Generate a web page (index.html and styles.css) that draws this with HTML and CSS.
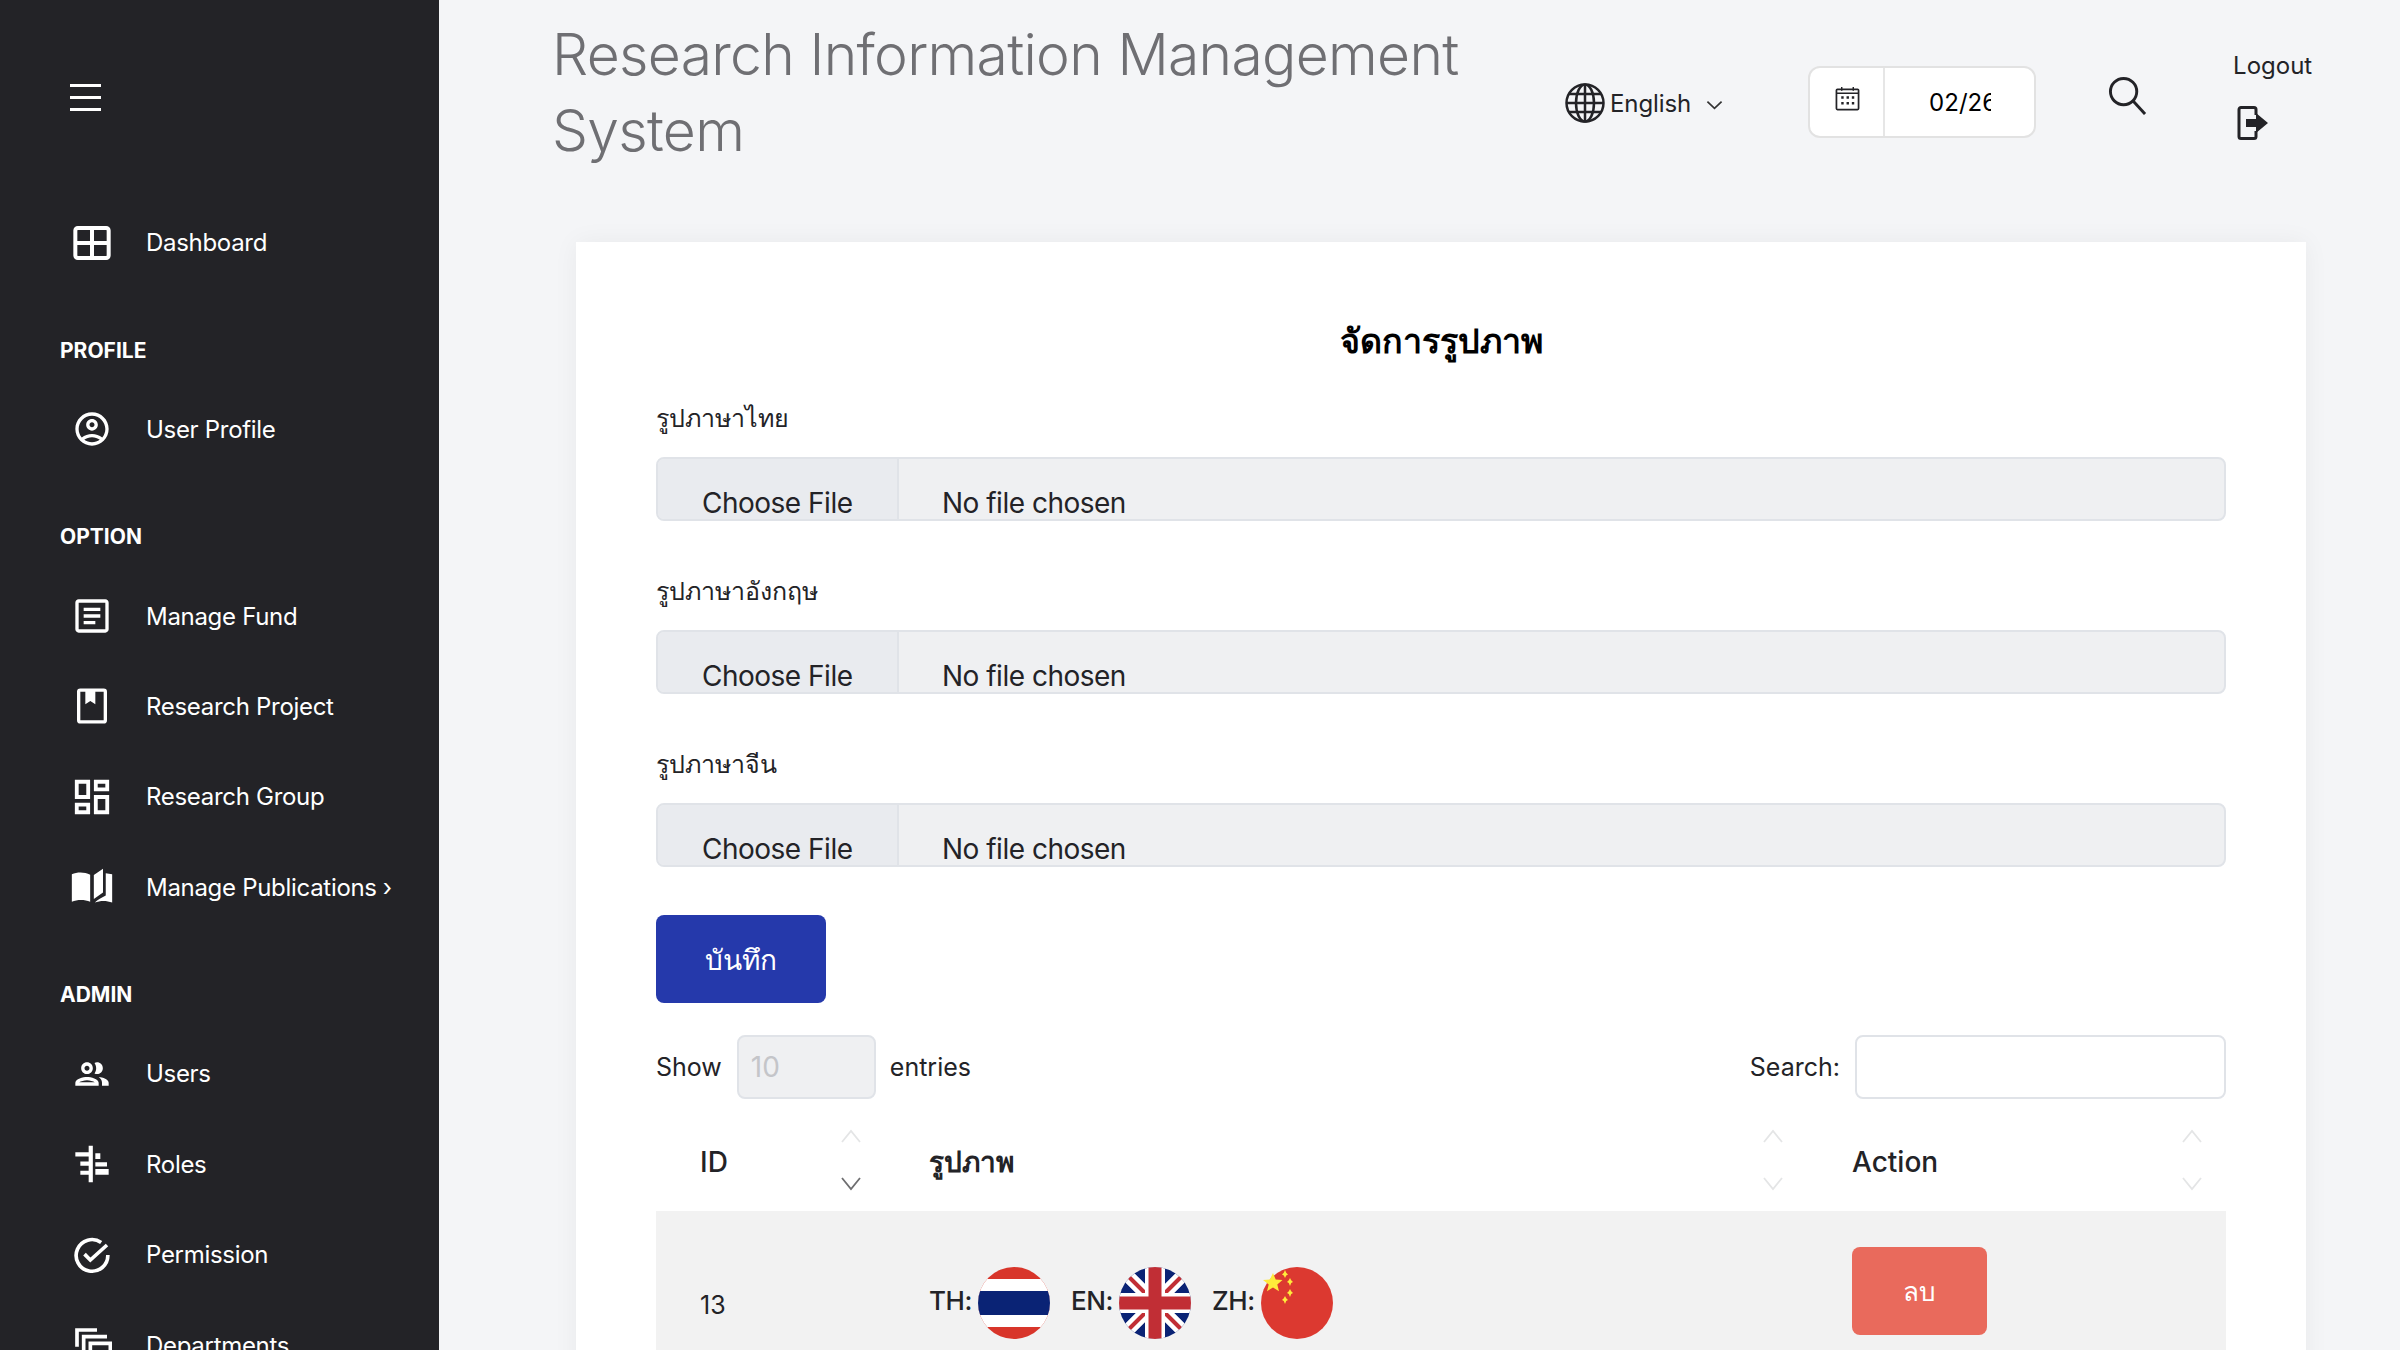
FILE: index.html
```html
<!DOCTYPE html>
<html>
	<head>
		<meta charset="utf-8">
		<title>Research Information Management System</title>
		<link rel="stylesheet" href="styles.css">
	</head>
	<body>
		<div class="sidebar">
			<div class="burger"><span></span><span></span><span></span></div>
			<ul class="menu first">
				<li>
					<svg class="ico" viewBox="0 0 24 24"><rect x="2" y="3" width="20" height="18" rx="1.500" fill="none" stroke="#fff" stroke-width="2.400"/><path d="M12 3v18M2 12h20" stroke="#fff" stroke-width="2.400"/></svg>
					Dashboard
				</li>
			</ul>
			<div class="sect">PROFILE</div>
			<ul class="menu">
				<li>
					<svg class="ico" viewBox="0 0 24 24"><path fill="#fff" d="M12 2C6.480 2 2 6.480 2 12s4.480 10 10 10 10-4.480 10-10S17.520 2 12 2zM7.350 18.500C8.660 17.560 10.260 17 12 17s3.340.56 4.650 1.500C15.340 19.440 13.740 20 12 20s-3.340-.56-4.650-1.500zm10.790-1.380C16.450 15.800 14.320 15 12 15s-4.450.8-6.140 2.120C4.700 15.730 4 13.950 4 12c0-4.420 3.580-8 8-8s8 3.580 8 8c0 1.950-.7 3.730-1.860 5.120zM12 6c-1.930 0-3.500 1.570-3.500 3.500S10.070 13 12 13s3.500-1.570 3.500-3.500S13.930 6 12 6zm0 5c-.83 0-1.500-.67-1.500-1.500S11.170 8 12 8s1.500.67 1.500 1.500S12.830 11 12 11z"/></svg>
					User Profile
				</li>
			</ul>
			<div class="sect">OPTION</div>
			<ul class="menu">
				<li>
					<svg class="ico" viewBox="0 0 24 24"><path fill="#fff" d="M20 4v16H4V4h16m0-2H4c-1.100 0-2 .9-2 2v16c0 1.100.9 2 2 2h16c1.100 0 2-.9 2-2V4c0-1.100-.9-2-2-2zM14 17H7v-2h7v2zm3-4H7v-2h10v2zm0-4H7V7h10v2z"/></svg>
					Manage Fund
				</li>
				<li>
					<svg class="ico" viewBox="0 0 24 24"><rect x="4" y="2.500" width="16" height="19" rx="1" fill="none" stroke="#fff" stroke-width="2"/><path fill="#fff" d="M8 3h6v8l-3-2-3 2z"/></svg>
					Research Project
				</li>
				<li>
					<svg class="ico" viewBox="1.500 1.500 21 21"><path fill="#fff" d="M19 5v2h-4V5h4M9 5v6H5V5h4m10 8v6h-4v-6h4M9 17v2H5v-2h4M21 3h-8v6h8V3zM11 3H3v10h8V3zm10 8h-8v10h8V11zm-10 4H3v6h8v-6z"/></svg>
					Research Group
				</li>
				<li>
					<svg class="ico wide" viewBox="0 0 24 24"><path fill="#fff" d="M1 5c3-1.200 7-1.200 10 .3V20c-3-1.200-7-1.200-10 0zM13 5.500 18 2v13l-5 3.500z"/><path fill="#fff" d="M19.500 4.500 23 5v15.500c-3-1.200-6.500-1.200-9.500 0 2-1.800 4-2.800 6-3.800z"/></svg>
					Manage Publications <i class="more">›</i>
				</li>
			</ul>
			<div class="sect">ADMIN</div>
			<ul class="menu">
				<li>
					<svg class="ico" viewBox="0 0 24 24"><path fill="#fff" d="M9 13.750c-2.340 0-7 1.170-7 3.500V19h14v-1.750c0-2.330-4.660-3.500-7-3.500zM4.340 17c.84-.58 2.870-1.250 4.660-1.250s3.820.67 4.660 1.250H4.340zM9 12c1.930 0 3.500-1.570 3.500-3.500S10.930 5 9 5 5.500 6.570 5.500 8.500 7.070 12 9 12zm0-5c.83 0 1.500.67 1.500 1.500S9.830 10 9 10s-1.500-.67-1.500-1.500S8.170 7 9 7zm7.040 6.810c1.160.84 1.960 1.960 1.960 3.440V19h4v-1.750c0-2.020-3.500-3.170-5.960-3.440zM15 12c1.930 0 3.500-1.570 3.500-3.500S16.930 5 15 5c-.54 0-1.040.13-1.500.35.630.89 1 1.980 1 3.150s-.37 2.260-1 3.150c.46.22.96.35 1.500.35z"/></svg>
					Users
				</li>
				<li>
					<svg class="ico" viewBox="0 0 24 24"><path fill="#fff" d="M10 1h2.500v22H10zM2 5h8v2.500H2zM5 10.500h5V13H5zM5 16h5v2.500H5zM14 5.500h3V9h-3zM14 11h7v2.500h-7zM14 15h8v3.500h-8z"/></svg>
					Roles
				</li>
				<li>
					<svg class="ico" viewBox="0 0 24 24"><path fill="none" stroke="#fff" stroke-width="2.200" d="M17.500 4.500A9.500 9.500 0 1 0 21.500 12"/><path fill="none" stroke="#fff" stroke-width="2.200" d="M7.500 11.500l3.500 3.500 10-9"/></svg>
					Permission
				</li>
				<li>
					<svg class="ico" viewBox="0 0 24 24"><path fill="none" stroke="#fff" stroke-width="2.200" d="M3 13V3h12M7 17V7h14M11 21V11h12v10z"/></svg>
					Departments
				</li>
			</ul>
		</div>

		<div class="main">
			<div class="topbar">
				<div class="apptitle">Research Information Management System</div>
				<div class="lang">
					<svg class="globe" viewBox="0 0 40 40"><g fill="none" stroke="#232327" stroke-width="2.500"><circle cx="20" cy="20" r="18.500"/><ellipse cx="20" cy="20" rx="9" ry="18.500"/><path d="M20 1.500v37M1.500 20h37M4 11h32M4 29h32"/></g></svg>
					<span>English</span>
					<svg class="caret" viewBox="0 0 18 10"><path d="M1.500 1.500 9 8.500l7.500-7" fill="none" stroke="#333" stroke-width="1.800"/></svg>
				</div>
				<div class="datebox">
					<div class="datecal">
						<svg viewBox="0 0 26 26"><rect x="1.500" y="3.500" width="23" height="21" rx="1" fill="none" stroke="#232327" stroke-width="1.800"/><path d="M1.500 7.500h23M7 1v4M19 1v4" stroke="#232327" stroke-width="1.500"/><path d="M6.500 12h2.500M12 12h2.500M17.500 12h2.500M6.500 18h2.500M12 18h2.500M17.500 18h2.500" stroke="#232327" stroke-width="2.600"/></svg>
					</div>
					<div class="dateval"><span>02/26/2024</span></div>
				</div>
				<svg class="bigsearch" viewBox="0 0 40 40"><circle cx="16" cy="16" r="13.500" fill="none" stroke="#232327" stroke-width="3"/><path d="M26 26l12 13" stroke="#232327" stroke-width="3"/></svg>
				<div class="logout">
					<div>Logout</div>
					<svg viewBox="0 0 32 34"><path d="M19 9V3.500a2 2 0 0 0-2-2H4a2 2 0 0 0-2 2v27a2 2 0 0 0 2 2h13a2 2 0 0 0 2-2V25" fill="none" stroke="#232327" stroke-width="3"/><path fill="#232327" d="M9 13h10V7l12 10-12 10v-6H9z"/></svg>
				</div>
			</div>

			<div class="card">
				<h2>จัดการรูปภาพ</h2>
				<div class="field">
					<div class="lbl">รูปภาษาไทย</div>
					<div class="filebox"><span class="filebtn">Choose File</span><span class="filename">No file chosen</span></div>
				</div>
				<div class="field">
					<div class="lbl">รูปภาษาอังกฤษ</div>
					<div class="filebox"><span class="filebtn">Choose File</span><span class="filename">No file chosen</span></div>
				</div>
				<div class="field">
					<div class="lbl">รูปภาษาจีน</div>
					<div class="filebox"><span class="filebtn">Choose File</span><span class="filename">No file chosen</span></div>
				</div>
				<button class="savebtn">บันทึก</button>

				<div class="tools">
					<div class="show">Show <span class="sel">10</span> entries</div>
					<div class="find">Search: <span class="findbox"></span></div>
				</div>

				<table class="tbl">
					<colgroup><col class="c1"><col class="c2"><col class="c3"></colgroup>
					<thead>
						<tr>
							<th><div class="thin">ID
								<span class="sort"><svg viewBox="0 0 20 14"><path d="M1 13 10 2l9 11" class="off"/></svg><svg viewBox="0 0 20 14"><path d="M1 1l9 11 9-11" class="on"/></svg></span>
							</div></th>
							<th><div class="thin thai">รูปภาพ
								<span class="sort"><svg viewBox="0 0 20 14"><path d="M1 13 10 2l9 11" class="off"/></svg><svg viewBox="0 0 20 14"><path d="M1 1l9 11 9-11" class="off"/></svg></span>
							</div></th>
							<th><div class="thin">Action
								<span class="sort"><svg viewBox="0 0 20 14"><path d="M1 13 10 2l9 11" class="off"/></svg><svg viewBox="0 0 20 14"><path d="M1 1l9 11 9-11" class="off"/></svg></span>
							</div></th>
						</tr>
					</thead>
					<tbody>
						<tr>
							<td class="idcell">13</td>
							<td>
								<div class="flags">
									<b>TH:</b>
									<svg class="flag" viewBox="0 0 72 72"><defs><clipPath id="rnd"><circle cx="36" cy="36" r="36"/></clipPath></defs><g clip-path="url(#rnd)"><rect width="72" height="72" fill="#d8352a"/><rect y="12" width="72" height="48" fill="#fff"/><rect y="24" width="72" height="24" fill="#0a2375"/></g></svg>
									<b>EN:</b>
									<svg class="flag" viewBox="0 0 72 72"><g clip-path="url(#rnd)"><rect width="72" height="72" fill="#0a2375"/><path d="M0 0l72 72M72 0 0 72" stroke="#fff" stroke-width="13"/><path d="M6 6l24 24M66 66 42 42M66 6 42 30M6 66l24-24" stroke="#c12e35" stroke-width="4"/><path d="M36 0v72M0 36h72" stroke="#fff" stroke-width="20"/><path d="M36 0v72M0 36h72" stroke="#c12e35" stroke-width="13"/></g></svg>
									<b>ZH:</b>
									<svg class="flag" viewBox="0 0 72 72"><circle cx="36" cy="36" r="36" fill="#dc3930"/><path fill="#ffeb3b" d="M12 6l2.700 6.500 6.800.4-5.200 4.500 1.700 6.800-6-3.700-6 3.700 1.700-6.800L2 12.900l6.800-.4z"/><path fill="#ffeb3b" d="M24 3l1.200 2.700L27 7.500l-1.800 1L24 11l-1.200-2.500-1.800-1 1.800-1.800zM29 11l1.200 2.200L32 15l-1.800 1L29 19l-1.200-3-1.800-1 1.800-1.800zM29 22l1.200 2.200L32 26l-1.800 1L29 30l-1.200-3-1.800-1 1.800-1.800zM24 29l1.200 2.200L27 33l-1.800 1L24 37l-1.200-3-1.800-1 1.800-1.800z"/></svg>
								</div>
							</td>
							<td class="actcell"><button class="delbtn">ลบ</button></td>
						</tr>
					</tbody>
				</table>
			</div>
		</div>
	</body>
</html>
```

FILE: styles.css
```css
*{
	margin: 0;
	padding: 0;
	box-sizing: border-box;
}
html, body{
	height: 100%;
	overflow: hidden;
}
body{
	display: flex;
	background: #f4f5f7;
	font-family: Inter, "Noto Sans", "Liberation Sans", sans-serif;
	color: #232327;
}

/* sidebar */
.sidebar{
	width: 439px;
	height: 1350px;
	flex: none;
	overflow: hidden;
	background: #232327;
	color: #fff;
	padding: 84px 0 0 60px;
}
.burger{
	width: 31px;
	margin-left: 10px;
	display: flex;
	flex-direction: column;
	gap: 9.500px;
}
.burger span{
	height: 2.500px;
	background: #fff;
}
.menu{
	list-style: none;
}
.menu.first{
	margin-top: 87px;
}
.menu li{
	height: 90.400px;
	display: flex;
	align-items: center;
	padding-left: 12px;
	font-size: 24px;
	letter-spacing: -0.300px;
	white-space: nowrap;
}
.ico{
	width: 40px;
	height: 40px;
	flex: none;
	margin-right: 34px;
}
.ico.wide{
	width: 44px;
	height: 44px;
	margin: 0 32px 0 -2px;
}
.more{
	font-style: normal;
	margin-left: 6px;
}
.sect{
	font-size: 21px;
	font-weight: 700;
	height: 30px;
	line-height: 30px;
	margin: 47.700px 0 18.600px;
}

/* top bar */
.main{
	flex: 1;
	min-width: 0;
	padding-left: 113px;
}
.topbar{
	height: 242px;
	display: flex;
	align-items: flex-start;
}
.apptitle{
	width: 990px;
	margin-top: 17px;
	font-size: 57px;
	font-weight: 300;
	letter-spacing: -0.700px;
	line-height: 76px;
	color: #6f6f73;
	flex: none;
}
.lang{
	display: flex;
	align-items: center;
	margin: 83px 0 0 23px;
	font-size: 24px;
	letter-spacing: -0.100px;
	flex: none;
}
.globe{
	width: 40px;
	height: 40px;
	margin-right: 5px;
}
.caret{
	width: 17px;
	height: 10px;
	margin: 4px 0 0 15px;
}
.datebox{
	width: 228px;
	height: 72px;
	margin: 66px 0 0 85px;
	display: flex;
	flex: none;
	background: #fff;
	border: 2px solid #e2e2e2;
	border-radius: 12px;
}
.datecal{
	width: 75px;
	padding: 18px 0 0 25px;
	border-right: 2px solid #e6e6e6;
}
.datecal svg{
	width: 25px;
	height: 25px;
	display: block;
}
.dateval{
	width: 62px;
	margin: 0 0 0 44px;
	overflow: hidden;
	white-space: nowrap;
	font-size: 24px;
	line-height: 70px;
	color: #000;
}
.bigsearch{
	width: 39px;
	height: 39px;
	margin: 76px 0 0 72px;
	flex: none;
}
.logout{
	margin: 51px 0 0 86px;
	font-size: 24px;
	line-height: 30px;
	flex: none;
}
.logout svg{
	display: block;
	width: 32px;
	height: 34px;
	margin: 25px 0 0 4px;
}

/* card */
.card{
	width: 1730px;
	height: 1300px;
	margin-left: 24px;
	padding: 0 80px;
	background: #fff;
	box-shadow: 0 0 24px rgba(0,0,0,0.05);
}
.card h2{
	text-align: center;
	font-size: 34px;
	font-weight: 700;
	line-height: 50px;
	padding-top: 74px;
	height: 124px;
	color: #000;
}
.field{
	height: 173px;
}
.lbl{
	font-size: 25px;
	line-height: 40px;
	padding-top: 32px;
	height: 91px;
}
.filebox{
	height: 64px;
	display: flex;
	overflow: hidden;
	background: #eff0f2;
	border: 2px solid #e0e3e8;
	border-radius: 8px;
	font-size: 28px;
	letter-spacing: -0.500px;
	line-height: 40px;
}
.filebtn{
	width: 241px;
	padding: 24px 0 0 44px;
	background: #e9ebef;
	border-right: 2px solid #e0e3e8;
}
.filename{
	padding: 24px 0 0 43px;
}
.savebtn{
	display: block;
	width: 170px;
	height: 88px;
	margin-top: 30px;
	padding-top: 2px;
	border: 0;
	border-radius: 8px;
	background: #2539ab;
	color: #fff;
	font: inherit;
	font-size: 28px;
}
.tools{
	display: flex;
	justify-content: space-between;
	margin-top: 32px;
	font-size: 25px;
	line-height: 30px;
}
.show, .find{
	display: flex;
	align-items: center;
	white-space: nowrap;
}
.sel{
	width: 139px;
	height: 64px;
	margin: 0 14px 0 15px;
	padding-left: 12px;
	line-height: 60px;
	font-size: 28px;
	color: #c4c5c9;
	background: #eff0f2;
	border: 2px solid #e0e3e8;
	border-radius: 8px;
}
.findbox{
	width: 371px;
	height: 64px;
	margin-left: 15px;
	background: #fff;
	border: 2px solid #e0e3e8;
	border-radius: 8px;
}

/* table */
.tbl{
	width: 100%;
	margin-top: 12px;
	border-collapse: collapse;
	table-layout: fixed;
}
.c1{ width: 229px; }
.c2{ width: 923px; }
.tbl th{
	height: 100px;
	text-align: left;
	font-size: 28px;
	font-weight: 500;
}
.thin{
	display: flex;
	justify-content: space-between;
	align-items: center;
	padding: 2px 24px 0 44px;
}
.thin.thai{
	font-weight: 700;
	padding-right: 25px;
}
.sort{
	display: flex;
	flex-direction: column;
	gap: 34px;
	margin-top: -4px;
}
.sort svg{
	display: block;
	width: 20px;
	height: 14px;
}
.sort path{
	fill: none;
	stroke-width: 1.800;
}
.sort .off{
	stroke: #e4e5e6;
}
.sort .on{
	stroke: #6e6e70;
}
.tbl td{
	height: 184px;
	background: #f2f2f2;
	padding-left: 44px;
	vertical-align: middle;
}
.idcell{
	font-size: 25px;
	padding-top: 3px;
}
.flags{
	display: flex;
	align-items: center;
	font-size: 26px;
}
.flags b{
	font-weight: 500;
	letter-spacing: -0.400px;
	margin: -6px 6px 0 0;
}
.flag{
	width: 72px;
	height: 72px;
	margin-right: 21px;
}
.tbl .actcell{
	vertical-align: top;
	padding-top: 36px;
}
.delbtn{
	display: block;
	width: 135px;
	height: 88px;
	border: 0;
	border-radius: 8px;
	background: #e96a5c;
	color: #fff;
	font: inherit;
	font-size: 26px;
}
```
